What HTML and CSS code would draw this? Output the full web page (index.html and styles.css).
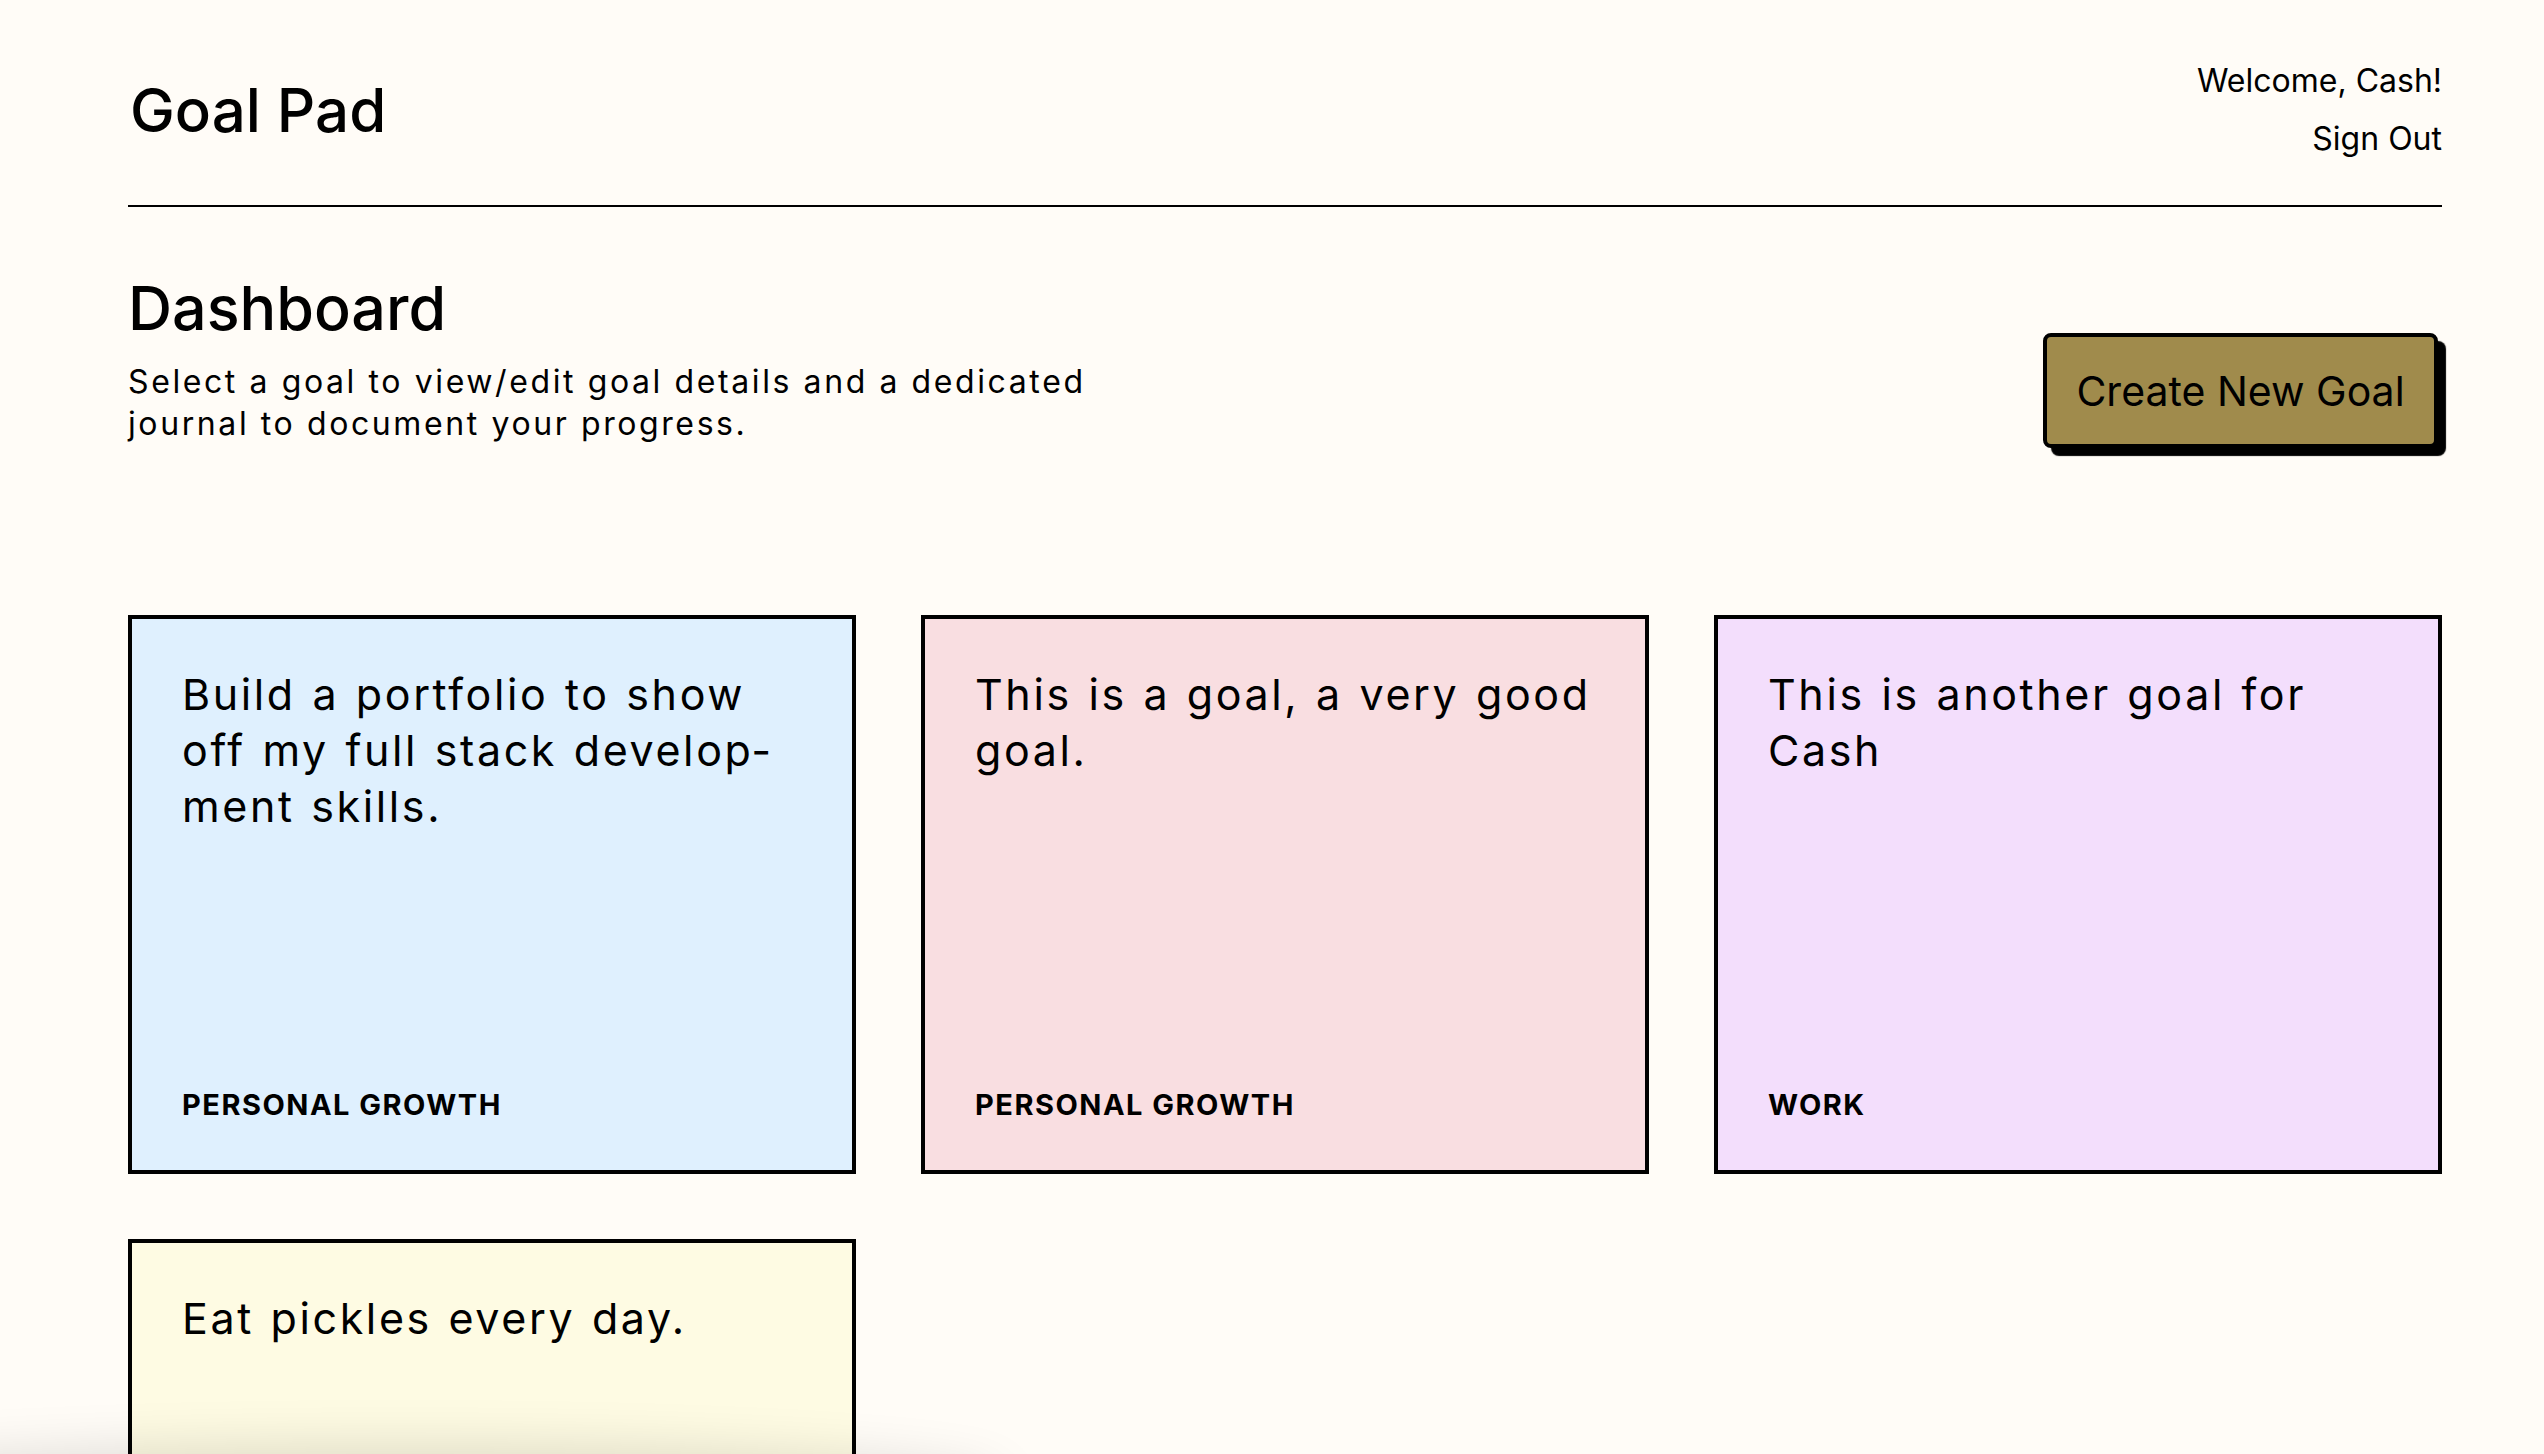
FILE: index.html
```html
<!DOCTYPE html>
<html lang="en">
<head>
<meta charset="utf-8">
<title>Goal Pad</title>
<link rel="stylesheet" href="styles.css">
</head>
<body>
<div class="page">
  <header class="topbar">
    <h1 class="logo">Goal Pad</h1>
    <nav class="user-nav">
      <p class="welcome">Welcome, Cash!</p>
      <a class="signout" href="#">Sign Out</a>
    </nav>
  </header>

  <section class="intro">
    <div class="intro-text">
      <h2 class="title">Dashboard</h2>
      <p class="subtitle">Select a goal to view/edit goal details and a dedicated journal to document your progress.</p>
    </div>
    <button class="create-btn" type="button">Create New Goal</button>
  </section>

  <main class="goal-grid">
    <a class="goal-card card-blue" href="#">
      <p class="goal-text">Build a portfolio to show off my full stack develop&shy;ment skills.</p>
      <span class="goal-cat">PERSONAL GROWTH</span>
    </a>
    <a class="goal-card card-pink" href="#">
      <p class="goal-text">This is a goal, a very good goal.</p>
      <span class="goal-cat">PERSONAL GROWTH</span>
    </a>
    <a class="goal-card card-purple" href="#">
      <p class="goal-text">This is another goal for Cash</p>
      <span class="goal-cat">WORK</span>
    </a>
    <a class="goal-card card-yellow" href="#">
      <p class="goal-text">Eat pickles every day.</p>
      <span class="goal-cat">HEALTH</span>
    </a>
  </main>
</div>
<div class="bottom-shade"></div>
</body>
</html>
```
FILE: styles.css
```css
* { box-sizing: border-box; }

html, body {
  margin: 0;
  padding: 0;
  background: #fffcf7;
  color: #000;
  font-family: Inter, "Open Sans", "Liberation Sans", sans-serif;
}

.page {
  padding: 0 102px 200px 128px;
}

.topbar {
  display: flex;
  justify-content: space-between;
  align-items: flex-start;
  height: 207px;
  border-bottom: 2px solid #000;
}

.logo {
  margin: 80px 0 0 2px;
  font-size: 60px;
  line-height: 1;
  font-weight: 500;
  letter-spacing: 0;
}

.user-nav {
  display: flex;
  flex-direction: column;
  align-items: flex-end;
  margin-top: 65px;
}

.welcome {
  margin: 0;
  font-size: 32px;
  line-height: 32px;
  font-weight: 400;
}

.signout {
  margin-top: 26px;
  font-size: 32px;
  line-height: 32px;
  color: #000;
  text-decoration: none;
}

.intro {
  display: flex;
  justify-content: space-between;
  align-items: flex-start;
  margin-top: 69px;
}

.intro-text {
  max-width: 1000px;
}

.title {
  margin: 0;
  font-size: 61px;
  line-height: 64px;
  font-weight: 500;
}

.subtitle {
  margin: 21px 0 0;
  font-size: 32px;
  line-height: 42px;
  letter-spacing: 2.6px;
}

.create-btn {
  margin: 57px 4px 0 0;
  width: 395px;
  height: 115px;
  background: #a08b4c;
  border: 4px solid #000;
  border-radius: 8px;
  box-shadow: 8px 8px 1px #000;
  font-family: inherit;
  font-size: 41px;
  color: #000;
  padding: 0;
  cursor: pointer;
}

.goal-grid {
  display: grid;
  grid-template-columns: repeat(3, 1fr);
  gap: 65px;
  margin-top: 167px;
}

.goal-card {
  display: flex;
  flex-direction: column;
  height: 559px;
  padding: 47px 44px 48px 50px;
  border: 4px solid #000;
  color: #000;
  text-decoration: none;
}

.card-blue { background: #dff0fe; }
.card-pink { background: #f9dee1; }
.card-purple { background: #f3defc; }
.card-yellow { background: #fefbe3; }

.goal-text {
  margin: 0;
  font-size: 43px;
  line-height: 56px;
  font-weight: 400;
  letter-spacing: 2.6px;
  word-spacing: 2px;
}

.goal-cat {
  margin-top: auto;
  font-size: 29px;
  line-height: 34px;
  font-weight: 700;
  letter-spacing: 1.5px;
}

.bottom-shade {
  position: fixed;
  left: -200px;
  bottom: -60px;
  width: 1200px;
  height: 60px;
  border-radius: 50%;
  box-shadow: 0 0 50px 10px rgba(0, 0, 0, 0.12);
  pointer-events: none;
}
```
